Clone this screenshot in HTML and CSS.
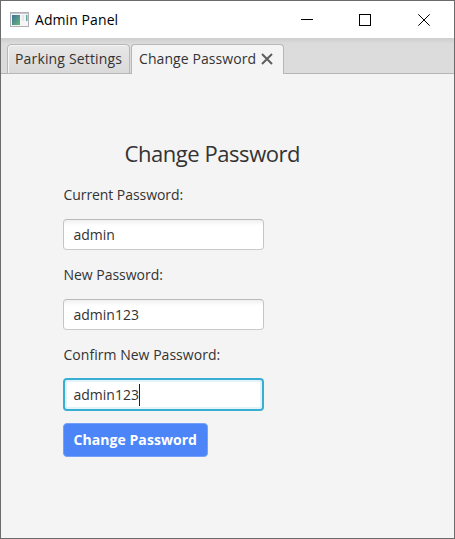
FILE: index.html
```html
<!DOCTYPE html>
<html lang="en">
<head>
<meta charset="utf-8">
<title>Admin Panel</title>
<link rel="stylesheet" href="styles.css">
</head>
<body>
<div class="window">
  <header class="titlebar">
    <svg class="app-icon" width="19" height="16" viewBox="0 0 19 16">
      <defs><linearGradient id="screen" x1="0" y1="0" x2="1" y2="1"><stop offset="0" stop-color="#3e719a"/><stop offset="1" stop-color="#69b778"/></linearGradient></defs>
      <rect x=".5" y=".5" width="18" height="14" fill="#f4f5f6" stroke="#aeb2b6"/>
      <path d="M1 1.5h17" stroke="#c5c9cc"/>
      <rect x="2" y="3" width="8" height="10" fill="url(#screen)"/>
      <rect x="12" y="3" width="2" height="6" fill="#e3e8e8"/>
      <rect x="16" y="3" width="1.5" height="6" fill="#67a69b"/>
    </svg>
    <span class="title">Admin Panel</span>
    <svg class="controls" width="130" height="12" viewBox="0 0 130 12" fill="none" stroke="#000">
      <path d="M0 5.5h12" shape-rendering="crispEdges"/>
      <rect x="58.5" y=".5" width="11" height="11"/>
      <path d="M117.3.3l11.4 11.4M128.7.3L117.3 11.7"/>
    </svg>
  </header>
  <nav class="tabs">
    <div class="tab tab-first"><span class="parking">Parking Settings</span></div>
    <div class="tab tab-active"><span class="changing">Change Password</span>
      <svg class="tab-close" width="12" height="12" viewBox="0 0 12 12"><path d="M1 1l10 10M11 1L1 11" stroke="#5e5e5e" stroke-width="2"/></svg>
    </div>
  </nav>
  <main class="content">
    <h1 class="heading"><span>Change Password</span></h1>
    <form class="form">
      <label class="label current">Current Password:</label>
      <div class="field"><span>admin</span></div>
      <label class="label new">New Password:</label>
      <div class="field"><span>admin123</span></div>
      <label class="label confirm">Confirm New Password:</label>
      <div class="field focused"><span>admin123</span><i class="caret"></i></div>
      <button class="submit" type="button"><span>Change Password</span></button>
    </form>
  </main>
</div>
</body>
</html>
```
FILE: styles.css
```css
* { box-sizing: border-box; }
body { margin: 0; font-family: "Open Sans", "Noto Sans", sans-serif; font-size: 14px; color: #333; }
.window { display: flex; flex-direction: column; width: 455px; height: 539px; border: 1px solid #6b6b6b; background: #f4f4f4; }
.titlebar { display: flex; flex: none; align-items: center; height: 37px; padding: 0 23px 0 9px; background: #fff; color: #000; }
.title { margin-left: 6px; line-height: 20px; letter-spacing: .08px; }
.controls { margin-left: auto; }
.tabs { display: flex; flex: none; align-items: flex-end; gap: 1px; height: 36px; padding-left: 6px; background: linear-gradient(#cecece, #dcdcdc 6px); box-shadow: inset 0 -1px #b5b5b5; }
.tab { display: flex; align-items: center; height: 30px; border: 1px solid #b7b7b7; border-radius: 4px 4px 0 0; line-height: 28px; white-space: nowrap; box-shadow: inset 1px 1px #f5f5f5; }
.tab-first { width: 123px; padding-left: 7px; background: linear-gradient(#e8e8e8, #d9d9d9); }
.tab-active { width: 153px; padding: 0 0 1px 7px; background: #f4f4f4; border-bottom: 0; }
.parking { letter-spacing: .16px; }
.changing { letter-spacing: .08px; }
.tab-close { margin-left: auto; margin-right: 10px; }
.content { padding: 62px 0 0 62px; }
.heading { width: 300px; height: 34px; margin: 0; padding-left: 61.5px; font-size: 22px; line-height: 34px; font-weight: 400; letter-spacing: -.44px; white-space: nowrap; }
.form { display: flex; flex-direction: column; align-items: flex-start; margin-top: 15px; }
.label { height: 20px; line-height: 20px; margin-bottom: 14px; padding-left: .5px; }
.current { letter-spacing: -.07px; }
.new { letter-spacing: -.02px; }
.confirm { letter-spacing: .03px; }
.field { display: flex; align-items: center; width: 201px; height: 31px; margin-bottom: 15px; padding: 0 0 1px 9.5px; border: 1px solid #c2c2c2; border-color: #b9b9b9 #c5c5c5 #cacaca; border-radius: 4px; background: linear-gradient(#f0f0f0, #fff 6px); letter-spacing: 0; }
.focused { height: 33px; margin-top: -1px; margin-bottom: 12px; padding: 0 0 0 8.5px; border: 2px solid #39aed3; background: #fff; box-shadow: inset 0 0 0 2px #e2f3f9; }
.caret { width: 1px; height: 22px; background: #222; }
.submit { width: 145px; height: 34px; padding: 0 0 0 9.5px; border: 1px solid #75a0fa; border-radius: 4px; background: #4b85f8; color: #fff; font: 700 14px/30px "Open Sans", sans-serif; letter-spacing: .06px; text-align: left; white-space: nowrap; }
```
